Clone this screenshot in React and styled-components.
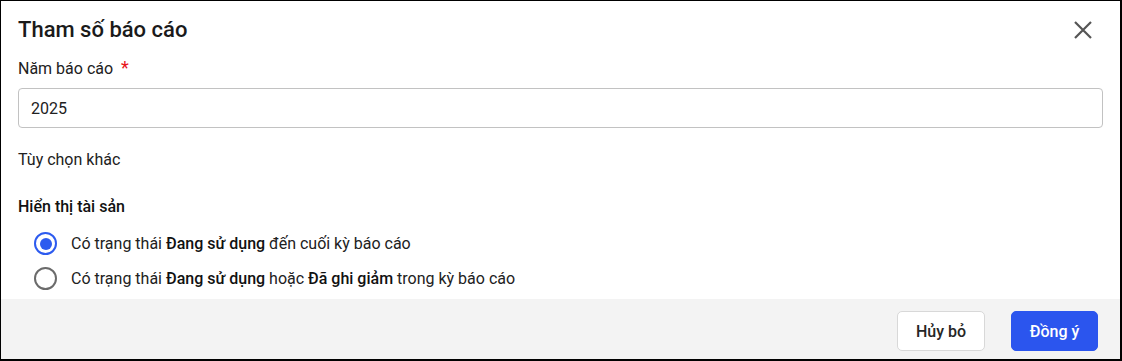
import React, { useState } from "react";
import styled, { createGlobalStyle } from "styled-components";

const Global = createGlobalStyle`
	body {
		margin: 0;
		font-family: Roboto, "Liberation Sans", sans-serif;
		color: #212121;
		background: #fff;
	}
`;

const Dialog = styled.div`
	width: 1122px;
	height: 361px;
	box-sizing: border-box;
	border-style: solid;
	border-color: #000;
	border-width: 1px 2px 2px 1px;
	display: flex;
	flex-direction: column;
	background: #fff;
`;

const Header = styled.div`
	height: 57px;
	padding: 0 17px;
	display: flex;
	align-items: center;
	justify-content: space-between;
`;

const Title = styled.h1`
	margin: 0;
	font-size: 22px;
	font-weight: 500;
	color: #1a1a1a;
`;

const CloseButton = styled.button`
	border: none;
	background: none;
	padding: 0;
	width: 24px;
	height: 24px;
	margin-right: 8px;
	display: flex;
	align-items: center;
	justify-content: center;
	cursor: pointer;
`;

const Body = styled.div`
	flex: 1;
	padding: 0 17px;
	display: flex;
	flex-direction: column;
`;

const Label = styled.div`
	font-size: 16px;
	line-height: 20px;
	color: ${(p) => (p.$bold ? "#111" : "#212121")};
	margin-top: ${(p) => p.$top || 0}px;
	font-weight: ${(p) => (p.$bold ? 500 : 400)};
`;

const Required = styled.span`
	color: #e8141b;
	margin-left: 8px;
	font-size: 18px;
`;

const Input = styled.input`
	margin-top: 9px;
	height: 40px;
	box-sizing: border-box;
	border: 1px solid #c2c2c2;
	border-radius: 4px;
	padding: 0 12px;
	font-family: inherit;
	font-size: 16px;
	color: #212121;
	outline: none;
`;

const RadioGroup = styled.div`
	margin-top: 9px;
	padding-left: 16px;
	display: flex;
	flex-direction: column;
`;

const RadioRow = styled.label`
	height: 35px;
	display: flex;
	align-items: center;
	gap: 14px;
	font-size: 16px;
	cursor: pointer;
	b {
		font-weight: 500;
		color: #111;
	}
`;

const RadioCircle = styled.span`
	width: 23px;
	height: 23px;
	box-sizing: border-box;
	border-radius: 50%;
	border: 2px solid ${(p) => (p.$checked ? "#2d5bef" : "#6b6b6b")};
	display: flex;
	align-items: center;
	justify-content: center;
	&::after {
		content: "";
		width: 12px;
		height: 12px;
		border-radius: 50%;
		background: #2d5bef;
		display: ${(p) => (p.$checked ? "block" : "none")};
	}
`;

const Footer = styled.div`
	height: 60px;
	background: #f3f3f3;
	display: flex;
	justify-content: flex-end;
	align-items: flex-start;
	padding: 12px 22px 0 0;
	box-sizing: border-box;
	gap: 26px;
`;

const Button = styled.button`
	height: 40px;
	width: ${(p) => p.$w}px;
	border-radius: 5px;
	font-family: inherit;
	font-size: 16px;
	font-weight: 500;
	cursor: pointer;
	border: 1px solid ${(p) => (p.$primary ? "#2b55ee" : "#d8d8d8")};
	background: ${(p) => (p.$primary ? "#2b55ee" : "#fff")};
	color: ${(p) => (p.$primary ? "#fff" : "#262626")};
`;

const options = [
	<>Có trạng thái <b>Đang sử dụng</b> đến cuối kỳ báo cáo</>,
	<>Có trạng thái <b>Đang sử dụng</b> hoặc <b>Đã ghi giảm</b> trong kỳ báo cáo</>,
];

export default function App() {
	const [choice, setChoice] = useState(0);
	return (
		<Dialog>
			<Global />
			<Header>
				<Title>Tham số báo cáo</Title>
				<CloseButton>
					<svg width="20" height="20" viewBox="0 0 20 20">
						<path d="M2 2 L18 18 M18 2 L2 18" stroke="#555" strokeWidth="2.2" />
					</svg>
				</CloseButton>
			</Header>
			<Body>
				<Label>
					Năm báo cáo<Required>*</Required>
				</Label>
				<Input defaultValue="2025" />
				<Label $top={22}>Tùy chọn khác</Label>
				<Label $top={27} $bold>
					Hiển thị tài sản
				</Label>
				<RadioGroup>
					{options.map((o, i) => (
						<RadioRow key={i} onClick={() => setChoice(i)}>
							<RadioCircle $checked={choice === i} />
							<span>{o}</span>
						</RadioRow>
					))}
				</RadioGroup>
			</Body>
			<Footer>
				<Button $w={88}>Hủy bỏ</Button>
				<Button $w={87} $primary>
					Đồng ý
				</Button>
			</Footer>
		</Dialog>
	);
}
